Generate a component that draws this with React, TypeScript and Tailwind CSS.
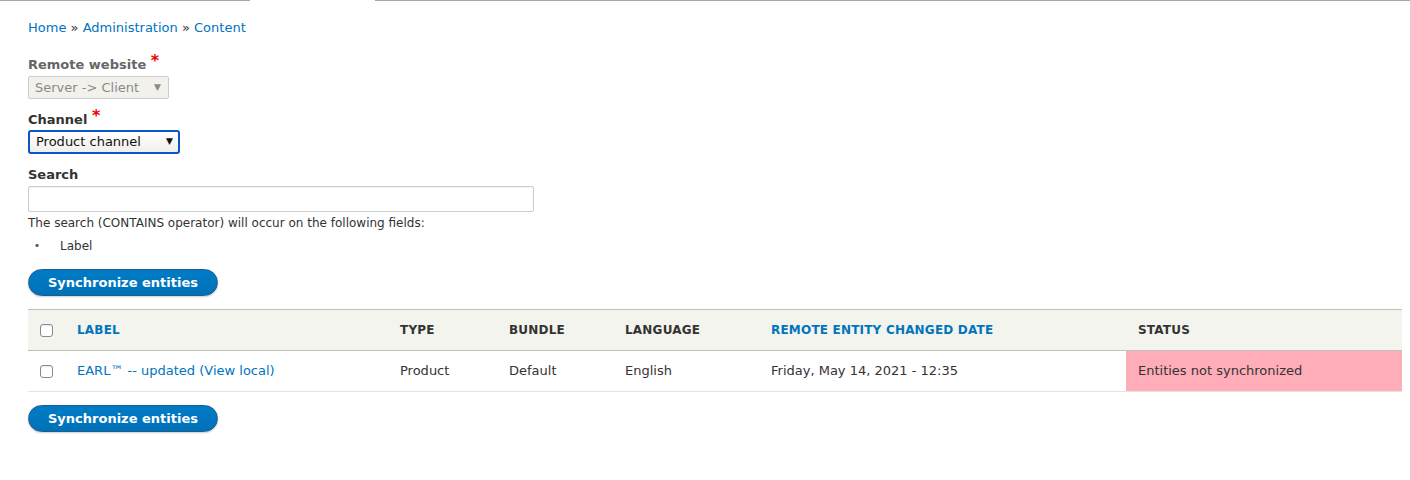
export default function App() {
  const cols = [
    { label: "LABEL", link: true, w: "w-[323px]" },
    { label: "TYPE", link: false, w: "w-[109px]" },
    { label: "BUNDLE", link: false, w: "w-[116px]" },
    { label: "LANGUAGE", link: false, w: "w-[146px]" },
    { label: "REMOTE ENTITY CHANGED DATE", link: true, w: "w-[367px]" },
    { label: "STATUS", link: false, w: "" },
  ];

  const syncButton = (
    <button className="h-[27px] w-[190px] rounded-full border border-[#1e5c90] bg-gradient-to-b from-[#007bc6] to-[#0071b8] text-[13px] font-bold text-white shadow-[0_1px_2px_rgba(0,0,0,0.2)]">
      Synchronize entities
    </button>
  );

  const checkbox = (
    <span className="block h-[13px] w-[13px] rounded-[3px] border border-[#8a8a8a] bg-white shadow-[inset_0_1px_1px_rgba(0,0,0,0.08)]" />
  );

  const star = <span className="relative -top-[3px] text-[16px] leading-none text-[#e00]">*</span>;

  return (
    <div className="h-[480px] w-[1410px] bg-white font-['DejaVu_Sans',sans-serif] text-[13px] text-[#333]">
      <div className="flex h-px">
        <div className="w-[250px] bg-[#a6a6a6]" />
        <div className="w-[125px]" />
        <div className="flex-1 bg-[#a6a6a6]" />
      </div>

      <div className="px-[28px]">
        <div className="pt-[17px] leading-[20px] text-[#0074bd]">
          <a href="#">Home</a> <span className="text-[#333]">»</span> <a href="#">Administration</a>{" "}
          <span className="text-[#333]">»</span> <a href="#">Content</a>
        </div>

        <div className="mt-[17px] font-bold leading-[20px] text-[#666]">Remote website {star}</div>
        <div className="mt-[1px] flex h-[23px] w-[141px] items-center justify-between rounded-[2px] border border-[#ccc] bg-[#f2f1eb] pl-[6px] pr-[7px] text-[#8a8a8a]">
          <span>Server -&gt; Client</span>
          <span className="text-[9px]">▼</span>
        </div>

        <div className="mt-[11px] font-bold leading-[20px]">Channel {star}</div>
        <div className="flex h-[24px] w-[152px] items-center justify-between rounded-[3px] border-2 border-[#0a55c9] bg-gradient-to-b from-white to-[#f0efea] pl-[6px] pr-[5px] text-[#111]">
          <span>Product channel</span>
          <span className="text-[9px]">▼</span>
        </div>

        <div className="mt-[11px] font-bold leading-[20px]">Search</div>
        <div className="mt-[1px] h-[26px] w-[506px] rounded-[2px] border border-[#ccc] shadow-[inset_0_1px_1px_rgba(0,0,0,0.05)]" />
        <div className="mt-[3px] text-[12px] leading-[16px]">
          The search (CONTAINS operator) will occur on the following fields:
        </div>
        <ul className="mt-[7px] pl-[32px] text-[12px] leading-[16px]">
          <li className="flex items-center">
            <span className="mr-[16px] -ml-[30px] w-[14px] text-center text-[11px] text-[#555]">•</span>
            Label
          </li>
        </ul>

        <div className="mt-[15px]">{syncButton}</div>

        <table className="mt-[13px] w-[1374px] border-collapse text-left">
          <thead>
            <tr className="h-[41px] border-t border-b border-[#bfbfba] bg-[#f3f4ee]">
              <th className="w-[37px] pl-[12px]">{checkbox}</th>
              {cols.map((c) => (
                <th
                  key={c.label}
                  className={`${c.w} px-[12px] text-[12px] font-bold tracking-[0.2px] ${
                    c.link ? "text-[#0074bd]" : "text-[#333]"
                  }`}
                >
                  {c.label}
                </th>
              ))}
            </tr>
          </thead>
          <tbody>
            <tr className="h-[41px] border-b border-[#e6e4df]">
              <td className="pl-[12px]">{checkbox}</td>
              <td className="px-[12px] text-[#0074bd]">EARL™ -- updated (View local)</td>
              <td className="px-[12px]">Product</td>
              <td className="px-[12px]">Default</td>
              <td className="px-[12px]">English</td>
              <td className="px-[12px]">Friday, May 14, 2021 - 12:35</td>
              <td className="bg-[#ffadb9] px-[12px]">Entities not synchronized</td>
            </tr>
          </tbody>
        </table>

        <div className="mt-[13px]">{syncButton}</div>
      </div>
    </div>
  );
}
